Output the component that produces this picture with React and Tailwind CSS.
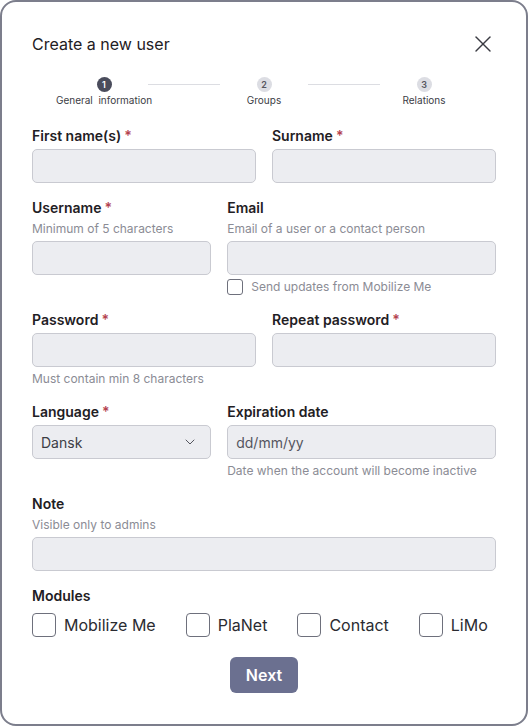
import { X, ChevronDown } from "lucide-react";

const Req = () => <span className="ml-[3px] text-[#b4424f]">*</span>;

function Label({ children, required }) {
  return (
    <div className="text-[14px] leading-[18px] font-semibold text-[#1f2024]">
      {children}
      {required && <Req />}
    </div>
  );
}

function Hint({ children }) {
  return <div className="mt-1 text-[12px] leading-[16px] text-[#8b8c95]">{children}</div>;
}

function Input({ placeholder }) {
  return (
    <div className="mt-1 h-[34px] rounded-[5px] border border-[#c9cad1] bg-[#ecedf1] px-2 flex items-center text-[14px] text-[#55565f]">
      {placeholder}
    </div>
  );
}

function Step({ n, label, active }) {
  return (
    <div className="w-20 flex flex-col items-center">
      <div
        className={
          "h-[15px] w-[15px] rounded-full flex items-center justify-center text-[9px] font-semibold " +
          (active ? "bg-[#4a4c5c] text-white" : "bg-[#dcdde3] text-[#55565f]")
        }
      >
        {n}
      </div>
      <div className="mt-px text-[10px] leading-[14px] text-[#3c3d45] whitespace-pre">{label}</div>
    </div>
  );
}

function Box({ size = "big" }) {
  return size === "big" ? (
    <div className="h-6 w-6 rounded-[4px] border border-[#6e707c] bg-white" />
  ) : (
    <div className="h-4 w-4 rounded-[3px] border border-[#6e707c] bg-white" />
  );
}

export default function App() {
  return (
    <div className="font-['Inter',sans-serif] bg-white">
      <div className="w-[528px] h-[726px] rounded-2xl border-2 border-[#7c7e8c] bg-white px-[30px] pt-[30px]">
        <div className="flex items-center justify-between h-6">
          <h1 className="text-[16px] text-[#1f2024]">Create a new user</h1>
          <X className="h-7 w-7 -mr-[1px] text-[#3a3b42]" strokeWidth={1.2} />
        </div>

        <div className="mt-[21px] flex items-start px-8">
          <Step n="1" label={"General  information"} active />
          <div className="flex-1 mx-1 mt-[7px] h-px bg-[#dcdde2]" />
          <Step n="2" label="Groups" />
          <div className="flex-1 mx-1 mt-[7px] h-px bg-[#dcdde2]" />
          <Step n="3" label="Relations" />
        </div>

        <div className="mt-5 grid grid-cols-2 gap-x-4">
          <div>
            <Label required>First name(s)</Label>
            <Input />
          </div>
          <div>
            <Label required>Surname</Label>
            <Input />
          </div>
        </div>

        <div className="mt-4 grid grid-cols-[2fr_3fr] gap-x-4">
          <div>
            <Label required>Username</Label>
            <Hint>Minimum of 5 characters</Hint>
            <Input />
          </div>
          <div>
            <Label>Email</Label>
            <Hint>Email of a user or a contact person</Hint>
            <Input />
            <div className="mt-1 flex items-center gap-2">
              <Box size="small" />
              <span className="text-[12px] leading-[16px] text-[#8b8c95]">Send updates from Mobilize Me</span>
            </div>
          </div>
        </div>

        <div className="mt-4 grid grid-cols-2 gap-x-4">
          <div>
            <Label required>Password</Label>
            <Input />
            <Hint>Must contain min 8 characters</Hint>
          </div>
          <div>
            <Label required>Repeat password</Label>
            <Input />
          </div>
        </div>

        <div className="mt-4 grid grid-cols-[2fr_3fr] gap-x-4">
          <div>
            <Label required>Language</Label>
            <div className="mt-1 h-[34px] rounded-[5px] border border-[#c9cad1] bg-[#ecedf1] pl-2 pr-3 flex items-center justify-between text-[14px] text-[#3c3d45]">
              <span>Dansk</span>
              <ChevronDown className="h-4 w-4 text-[#55565f]" strokeWidth={1.5} />
            </div>
          </div>
          <div>
            <Label>Expiration date</Label>
            <Input placeholder="dd/mm/yy" />
            <Hint>Date when the account will become inactive</Hint>
          </div>
        </div>

        <div className="mt-4">
          <Label>Note</Label>
          <Hint>Visible only to admins</Hint>
          <Input />
        </div>

        <div className="mt-4">
          <Label>Modules</Label>
          <div className="mt-2 flex items-center gap-[30px]">
            {["Mobilize Me", "PlaNet", "Contact", "LiMo"].map((m) => (
              <label key={m} className="flex items-center gap-2">
                <Box />
                <span className="text-[16px] text-[#2a2b31]">{m}</span>
              </label>
            ))}
          </div>
        </div>

        <div className="mt-5 flex justify-center">
          <button className="h-9 w-[68px] rounded-md bg-[#6b7090] text-[16px] font-semibold text-white">
            Next
          </button>
        </div>
      </div>
    </div>
  );
}
